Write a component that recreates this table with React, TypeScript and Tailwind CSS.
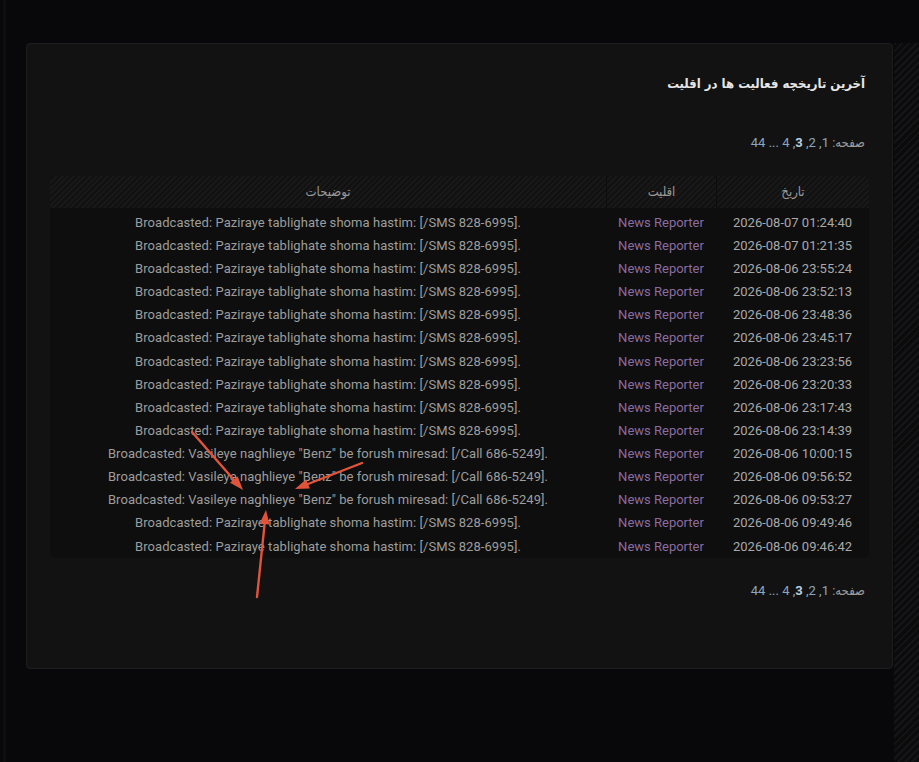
import React from "react";

/* ================= DATA ================= */

type LogRow = {
  date: string;
  member: string;
  text: string;
};

const SMS = "Broadcasted: Paziraye tablighate shoma hastim: [/SMS 828-6995].";
const CALL = 'Broadcasted: Vasileye naghlieye "Benz" be forush miresad: [/Call 686-5249].';

const rows: LogRow[] = [
  { date: "2026-08-07 01:24:40", member: "News Reporter", text: SMS },
  { date: "2026-08-07 01:21:35", member: "News Reporter", text: SMS },
  { date: "2026-08-06 23:55:24", member: "News Reporter", text: SMS },
  { date: "2026-08-06 23:52:13", member: "News Reporter", text: SMS },
  { date: "2026-08-06 23:48:36", member: "News Reporter", text: SMS },
  { date: "2026-08-06 23:45:17", member: "News Reporter", text: SMS },
  { date: "2026-08-06 23:23:56", member: "News Reporter", text: SMS },
  { date: "2026-08-06 23:20:33", member: "News Reporter", text: SMS },
  { date: "2026-08-06 23:17:43", member: "News Reporter", text: SMS },
  { date: "2026-08-06 23:14:39", member: "News Reporter", text: SMS },
  { date: "2026-08-06 10:00:15", member: "News Reporter", text: CALL },
  { date: "2026-08-06 09:56:52", member: "News Reporter", text: CALL },
  { date: "2026-08-06 09:53:27", member: "News Reporter", text: CALL },
  { date: "2026-08-06 09:49:46", member: "News Reporter", text: SMS },
  { date: "2026-08-06 09:46:42", member: "News Reporter", text: SMS },
];

const font = "font-['Roboto','DejaVu_Sans_Condensed','DejaVu_Sans',sans-serif]";

/* ================= HELPERS ================= */

function Pager() {
  return (
    <div dir="rtl" className="h-[18px] pr-[4px] text-[13px] leading-[18px] text-[#9c9c9c]">
      <span>صفحه: </span>
      <span className="text-[#8ea6bd]">1</span>
      <span className="text-[#8ea6bd]">, </span>
      <span className="text-[#8ea6bd]">2</span>
      <span className="text-[#8ea6bd]">, </span>
      <span className="font-bold text-[#b9cde0]">3</span>
      <span className="text-[#8ea6bd]">, </span>
      <span className="text-[#8ea6bd]">4</span>
      <span className="text-[#8ea6bd]"> ... </span>
      <span className="text-[#8ea6bd]">44</span>
    </div>
  );
}

// red annotation arrows drawn over the table
function Arrows() {
  return (
    <svg className="pointer-events-none absolute left-0 top-0" width="919" height="762">
      <g stroke="#e2543a" strokeWidth="2.4" strokeLinecap="round" fill="none">
        <line x1="192" y1="432" x2="234" y2="480" />
        <line x1="362" y1="463" x2="308" y2="484" />
        <line x1="257" y1="597" x2="264.6" y2="524" />
      </g>
      <g fill="#e2543a">
        <polygon points="243,490 230,482.8 237.6,476.2" />
        <polygon points="295,489 306.2,479.2 309.8,488.6" />
        <polygon points="266,510 269.5,524.4 259.6,523.4" />
      </g>
    </svg>
  );
}

/* ================= MAIN ================= */

export default function App() {
  return (
    <div className={`relative flex h-[762px] w-full overflow-hidden bg-[#08080b] ${font}`}>
      {/* left edge */}
      <div className="flex w-[26px] shrink-0">
        <div className="ml-[3px] h-full w-[3px] bg-[#0e0e11]" />
      </div>

      {/* main card */}
      <div className="flex flex-col pt-[43px]">
        <div className="flex h-[626px] w-[867px] flex-col rounded-[4px] border border-[#1d1d1d] bg-[#121212] px-[23px] pt-[30px]">
          <h2 dir="rtl" className="h-[20px] pr-[4px] font-['DejaVu_Sans_Condensed','DejaVu_Sans',sans-serif] text-[13px] font-bold leading-[20px] text-[#e6e6e6]">
            آخرین تاریخچه فعالیت ها در اقلیت
          </h2>

          <div className="mt-[40px]">
            <Pager />
          </div>

          {/* table */}
          <div dir="rtl" className="mt-[24px] overflow-hidden rounded-[5px] bg-[#0e0e0e]">
            <div className="grid h-[32px] grid-cols-[153px_110px_1fr] bg-[repeating-linear-gradient(135deg,#181818_0px,#181818_2px,#111111_2px,#111111_4px)] text-[13px] text-[#9a9a9a]">
              <div className="flex items-center justify-center border-l border-[#0d0d0d]">تاریخ</div>
              <div className="flex items-center justify-center border-l border-[#0d0d0d]">اقلیت</div>
              <div className="flex items-center justify-center">توضیحات</div>
            </div>
            <div className="pt-[3px]">
              {rows.map((r, i) => (
                <div key={i} className="grid h-[23.14px] grid-cols-[153px_110px_1fr] items-center text-[13px]">
                  <div dir="ltr" className="text-center text-[#a9a9a9]">{r.date}</div>
                  <div dir="ltr" className="text-center text-[#8b6c9e]">{r.member}</div>
                  <div dir="ltr" className="text-center tracking-[0.06px] text-[#9d9d9d]">{r.text}</div>
                </div>
              ))}
            </div>
          </div>

          <div className="mt-[24px]">
            <Pager />
          </div>
        </div>
      </div>

      {/* right panel */}
      <div className="ml-px mt-[43px] flex-1 bg-[repeating-linear-gradient(135deg,#151517_0px,#151517_2px,#0b0b0c_2px,#0b0b0c_5px)]" />

      <Arrows />
    </div>
  );
}
